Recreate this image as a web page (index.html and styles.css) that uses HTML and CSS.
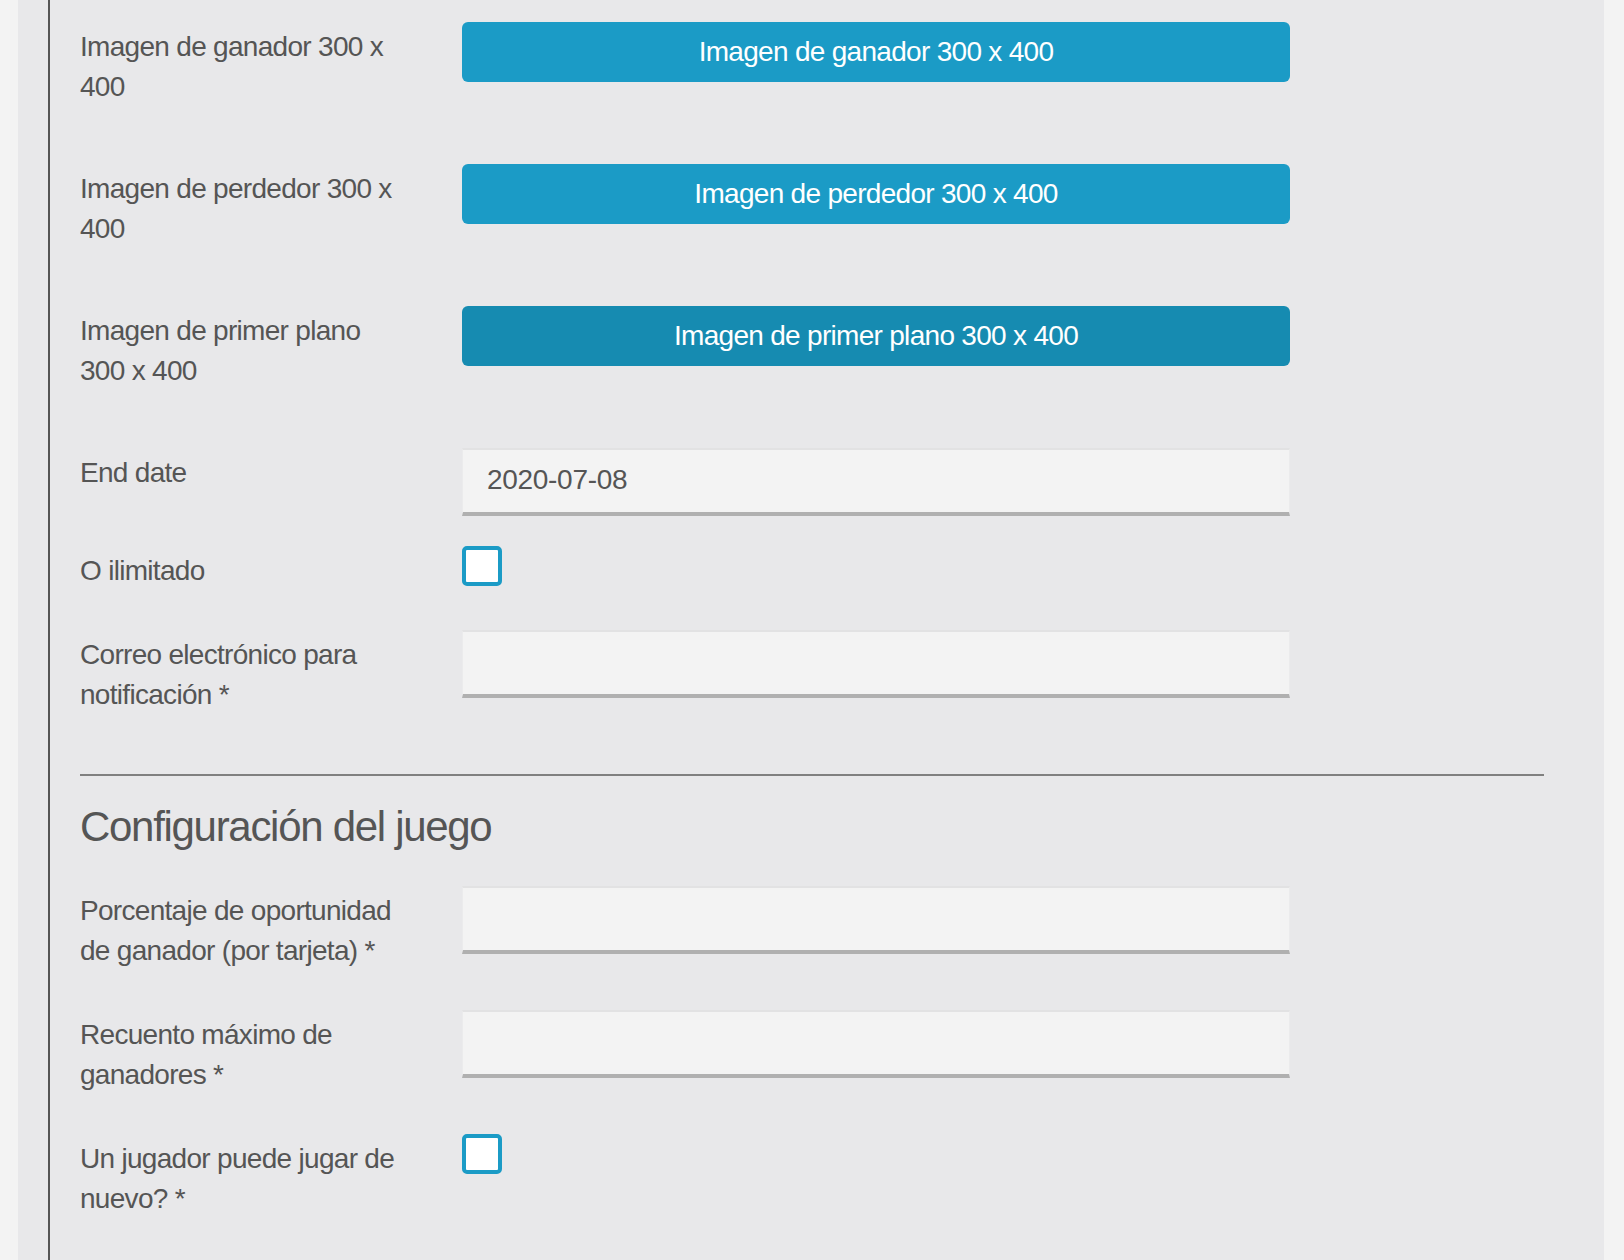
FILE: index.html
```html
<!DOCTYPE html>
<html lang="es">
<head>
<meta charset="utf-8">
<title>Configuración</title>
<link rel="stylesheet" href="styles.css">
</head>
<body>
<div class="page">
  <div class="panel">
    <div class="content">
      <form class="form">
        <div class="group group--upload">
          <label class="label">Imagen de ganador 300 x<br>400</label>
          <div class="control"><button type="button" class="btn">Imagen de ganador 300 x 400</button></div>
        </div>
        <div class="group group--upload">
          <label class="label">Imagen de perdedor 300 x<br>400</label>
          <div class="control"><button type="button" class="btn">Imagen de perdedor 300 x 400</button></div>
        </div>
        <div class="group group--upload">
          <label class="label">Imagen de primer plano<br>300 x 400</label>
          <div class="control"><button type="button" class="btn btn--active">Imagen de primer plano 300 x 400</button></div>
        </div>
        <div class="group">
          <label class="label">End date</label>
          <div class="control"><input type="text" class="input" value="2020-07-08"></div>
        </div>
        <div class="group">
          <label class="label">O ilimitado</label>
          <div class="control"><input type="checkbox" class="check"></div>
        </div>
        <div class="group group--last">
          <label class="label">Correo electrónico para<br>notificación *</label>
          <div class="control"><input type="text" class="input" value=""></div>
        </div>
        <hr class="divider">
        <h2 class="section-title">Configuración del juego</h2>
        <div class="group">
          <label class="label">Porcentaje de oportunidad<br>de ganador (por tarjeta) *</label>
          <div class="control"><input type="text" class="input" value=""></div>
        </div>
        <div class="group">
          <label class="label">Recuento máximo de<br>ganadores *</label>
          <div class="control"><input type="text" class="input" value=""></div>
        </div>
        <div class="group">
          <label class="label">Un jugador puede jugar de<br>nuevo? *</label>
          <div class="control"><input type="checkbox" class="check"></div>
        </div>
      </form>
    </div>
  </div>
</div>
</body>
</html>
```

FILE: styles.css
```css
html, body {
  margin: 0;
  padding: 0;
  height: 100%;
  overflow: hidden;
}

body {
  background: #f3f3f3;
  font-family: "Liberation Sans", Arial, "Helvetica Neue", sans-serif;
  color: #555;
}

.page {
  display: flex;
  padding: 0 20px 0 18px;
  min-height: 100vh;
  box-sizing: border-box;
}

.panel {
  flex: 1;
  background: #e8e8ea;
  padding: 0 30px 0 30px;
  display: flex;
}

.content {
  flex: 1;
  border-left: 2px solid #555;
  padding: 0 30px 0 30px;
}

.form {
  display: flex;
  flex-direction: column;
  padding-top: 22px;
  margin: 0;
}

.group {
  display: flex;
  align-items: flex-start;
  margin-bottom: 30px;
}

.group--upload {
  margin-bottom: 48px;
}

.group--last {
  margin-bottom: 50px;
}

.label {
  width: 382px;
  flex: none;
  box-sizing: border-box;
  padding: 5px 20px 9px 0;
  font-size: 28px;
  line-height: 40px;
  letter-spacing: -0.7px;
  white-space: nowrap;
  color: #555;
}

.control {
  width: 828px;
  flex: none;
}

.btn {
  display: block;
  width: 100%;
  height: 60px;
  margin: 0;
  border: 0;
  border-radius: 6px;
  background: #1b9bc6;
  color: #fff;
  font-family: inherit;
  font-size: 28px;
  line-height: 40px;
  letter-spacing: -0.7px;
  padding: 0;
  cursor: pointer;
}

.btn--active {
  background: #168bb1;
}

.input {
  display: block;
  width: 100%;
  height: 68px;
  box-sizing: border-box;
  margin: 0;
  padding: 0 24px 3px;
  background: #f3f3f3;
  border: 0;
  border-top: 2px solid #e2e2e3;
  border-left: 1px solid #ebebec;
  border-right: 1px solid #ebebec;
  border-bottom: 4px solid #b0b0b0;
  border-radius: 0;
  font-family: inherit;
  font-size: 28px;
  letter-spacing: -0.3px;
  color: #555;
  outline: none;
}

.check {
  appearance: none;
  -webkit-appearance: none;
  display: block;
  width: 40px;
  height: 40px;
  margin: 0;
  box-sizing: border-box;
  border: 4px solid #1b9bc6;
  border-radius: 5px;
  background: #fff;
}

.divider {
  margin: 0;
  height: 2px;
  border: 0;
  background: #808080;
}

.section-title {
  margin: 28px 0 36px;
  font-size: 42px;
  line-height: 46px;
  font-weight: normal;
  letter-spacing: -1.3px;
  color: #555;
}
```
